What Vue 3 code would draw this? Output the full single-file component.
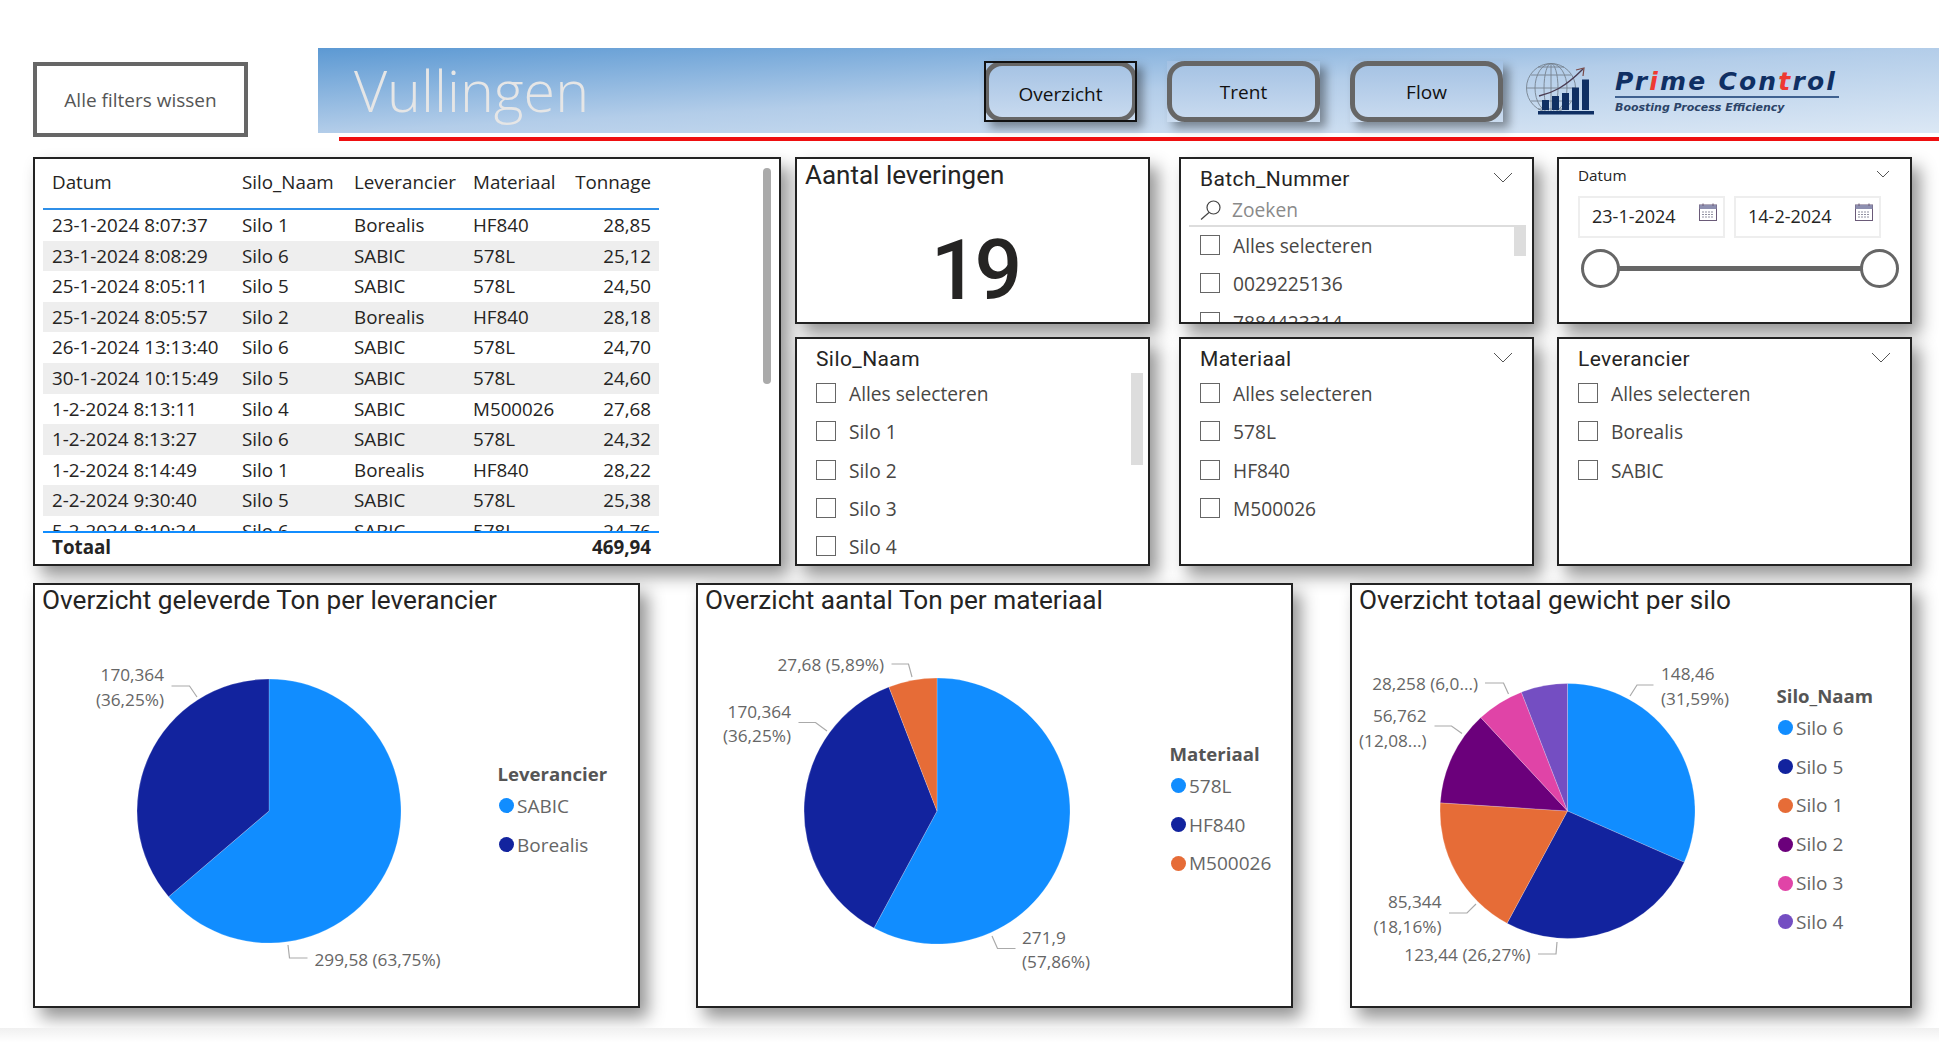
<script setup>
const rows = [
  ['23-1-2024 8:07:37', 'Silo 1', 'Borealis', 'HF840', '28,85'],
  ['23-1-2024 8:08:29', 'Silo 6', 'SABIC', '578L', '25,12'],
  ['25-1-2024 8:05:11', 'Silo 5', 'SABIC', '578L', '24,50'],
  ['25-1-2024 8:05:57', 'Silo 2', 'Borealis', 'HF840', '28,18'],
  ['26-1-2024 13:13:40', 'Silo 6', 'SABIC', '578L', '24,70'],
  ['30-1-2024 10:15:49', 'Silo 5', 'SABIC', '578L', '24,60'],
  ['1-2-2024 8:13:11', 'Silo 4', 'SABIC', 'M500026', '27,68'],
  ['1-2-2024 8:13:27', 'Silo 6', 'SABIC', '578L', '24,32'],
  ['1-2-2024 8:14:49', 'Silo 1', 'Borealis', 'HF840', '28,22'],
  ['2-2-2024 9:30:40', 'Silo 5', 'SABIC', '578L', '25,38'],
  ['5-2-2024 8:10:24', 'Silo 6', 'SABIC', '578L', '24,76'],
]
const C = { blue: '#118dff', navy: '#12239e', orange: '#e66c37', plum: '#6b007b', pink: '#e044a7', violet: '#744ec2' }

function slices(cx, cy, r, parts) {
  let a = 0
  return parts.map(([pct, fill]) => {
    const s = a
    a += (pct / 100) * Math.PI * 2
    const x0 = cx + r * Math.sin(s), y0 = cy - r * Math.cos(s)
    const x1 = cx + r * Math.sin(a), y1 = cy - r * Math.cos(a)
    const large = pct > 50 ? 1 : 0
    return { fill, d: `M${cx} ${cy}L${x0} ${y0}A${r} ${r} 0 ${large} 1 ${x1} ${y1}Z` }
  })
}

const charts = [
  {
    title: 'Overzicht geleverde Ton per leverancier',
    cls: 'chart-a',
    w: 607,
    pie: slices(236, 228, 132, [[63.75, C.blue], [36.25, C.navy]]),
    lines: ['138.5,103 156.5,103 164,114', '255,362 256.5,375 274.5,375'],
    labels: [
      { x: 131, y: 98, a: 'end', t: '170,364' },
      { x: 131, y: 123, a: 'end', t: '(36,25%)' },
      { x: 281.5, y: 383, a: 'start', t: '299,58 (63,75%)' },
    ],
    legend: { title: 'Leverancier', items: [['SABIC', C.blue], ['Borealis', C.navy]] },
  },
  {
    title: 'Overzicht aantal Ton per materiaal',
    cls: 'chart-b',
    w: 597,
    pie: slices(241, 228, 133, [[57.86, C.blue], [36.25, C.navy], [5.89, C.orange]]),
    lines: ['195.5,81 212.5,81 216,94', '102.5,139.5 119.5,139.5 131,148', '296,353 301.5,365.5 319.5,365.5'],
    labels: [
      { x: 188, y: 88, a: 'end', t: '27,68 (5,89%)' },
      { x: 95, y: 135, a: 'end', t: '170,364' },
      { x: 95, y: 159, a: 'end', t: '(36,25%)' },
      { x: 326, y: 361, a: 'start', t: '271,9' },
      { x: 326, y: 385, a: 'start', t: '(57,86%)' },
    ],
    legend: { title: 'Materiaal', items: [['578L', C.blue], ['HF840', C.navy], ['M500026', C.orange]] },
  },
  {
    title: 'Overzicht totaal gewicht per silo',
    cls: 'chart-c',
    w: 562,
    pie: slices(217.5, 228, 127.5, [[31.59, C.blue], [26.27, C.navy], [18.16, C.orange], [12.08, C.plum], [6.01, C.pink], [5.89, C.violet]]),
    lines: ['280,113 287,102 303.5,102', '135,100 153.5,100 158.5,111', '84.5,143 101.5,143 112,150.5', '99,330 117,330 126,321', '188,371 206,371 207,359'],
    labels: [
      { x: 311, y: 97, a: 'start', t: '148,46' },
      { x: 311, y: 122, a: 'start', t: '(31,59%)' },
      { x: 128, y: 107, a: 'end', t: '28,258 (6,0...)' },
      { x: 76.5, y: 139, a: 'end', t: '56,762' },
      { x: 76.5, y: 164, a: 'end', t: '(12,08...)' },
      { x: 91.5, y: 325, a: 'end', t: '85,344' },
      { x: 91.5, y: 350, a: 'end', t: '(18,16%)' },
      { x: 180.5, y: 378, a: 'end', t: '123,44 (26,27%)' },
    ],
    legend: {
      title: 'Silo_Naam',
      items: [['Silo 6', C.blue], ['Silo 5', C.navy], ['Silo 1', C.orange], ['Silo 2', C.plum], ['Silo 3', C.pink], ['Silo 4', C.violet]],
    },
  },
]
const dates = ['23-1-2024', '14-2-2024']
const nav = ['Overzicht', 'Trent', 'Flow']
</script>

<template>
  <div class="page">
    <div class="canvas">
      <header class="top">
        <button class="clear">Alle filters wissen</button>
        <div class="head-col">
          <div class="banner">
            <h1 class="title">Vullingen</h1>
            <div class="navs">
              <div v-for="(n, i) in nav" :key="n" class="nav" :class="{ active: i === 0 }">
                <span class="nav-in">{{ n }}</span>
              </div>
            </div>
            <div class="logo">
              <svg class="globe" width="72" height="54" viewBox="0 0 72 54">
                <g fill="none" stroke="#76828f" stroke-width="0.9">
                  <circle cx="27" cy="25" r="24.5" />
                  <ellipse cx="27" cy="25" rx="16" ry="24.5" />
                  <ellipse cx="27" cy="25" rx="7" ry="24.5" />
                  <path d="M27 .5V49.5M3 25H51M7 12H47M7 38H47M14 4H40M14 46H40" />
                </g>
                <g fill="#0f2f63">
                  <rect x="18" y="37" width="7" height="10" />
                  <rect x="28" y="33" width="7" height="14" />
                  <rect x="38" y="30" width="7" height="17" />
                  <rect x="48" y="24.5" width="7" height="22.5" />
                  <rect x="58" y="16.5" width="7" height="30.5" />
                  <rect x="14" y="48" width="56" height="3.5" />
                </g>
                <path d="M15 33C28 30 40 25 59 6" fill="none" stroke="#4a3c52" stroke-width="1.4" />
                <path d="M52 7L60 5L59 13" fill="none" stroke="#7a4a48" stroke-width="1.2" />
              </svg>
              <div class="brand">
                <div class="brand-name">Pr<em>i</em>me Con<em>t</em>rol</div>
                <div class="brand-tag">Boosting Process Efficiency</div>
              </div>
            </div>
          </div>
          <div class="redline"></div>
        </div>
      </header>

      <section class="mid">
        <div class="card table-card">
          <div class="tbl-row tbl-head">
            <span>Datum</span><span>Silo_Naam</span><span>Leverancier</span><span>Materiaal</span><span class="num">Tonnage</span>
          </div>
          <div class="tbl-body">
            <div v-for="(r, i) in rows" :key="i" class="tbl-row" :class="{ alt: i % 2 === 1 }">
              <span>{{ r[0] }}</span><span>{{ r[1] }}</span><span>{{ r[2] }}</span><span>{{ r[3] }}</span><span class="num">{{ r[4] }}</span>
            </div>
          </div>
          <div class="tbl-row tbl-total">
            <span>Totaal</span><span></span><span></span><span></span><span class="num">469,94</span>
          </div>
          <div class="tbl-scroll"></div>
        </div>

        <div class="card kpi">
          <div class="din kpi-title">Aantal leveringen</div>
          <div class="din kpi-value">19</div>
        </div>

        <div class="card slicer batch">
          <div class="din sl-title">Batch_Nummer</div>
          <svg class="chev" width="20" height="11" viewBox="0 0 20 11"><path d="M1 1L10 10L19 1" fill="none" stroke="#555" /></svg>
          <div class="search">
            <svg width="22" height="20" viewBox="0 0 22 20"><circle cx="13.5" cy="7.5" r="6.5" fill="none" stroke="#444" stroke-width="1.2" /><path d="M9 12.5L1 19.5" stroke="#444" stroke-width="1.2" /></svg>
            <span>Zoeken</span>
          </div>
          <div class="sl-bar batch-bar"></div>
          <div class="sl-list batch-list">
            <div class="sl-item"><i></i>Alles selecteren</div>
            <div class="sl-item"><i></i>0029225136</div>
            <div class="sl-item"><i></i>7884423314</div>
          </div>
        </div>

        <div class="card slicer date">
          <div class="date-title">Datum</div>
          <svg class="chev chev-date" width="14" height="8" viewBox="0 0 14 8"><path d="M1 1L7 7L13 1" fill="none" stroke="#555" /></svg>
          <div class="date-row">
            <div v-for="d in dates" :key="d" class="date-box">
              <span>{{ d }}</span>
              <svg width="18" height="18" viewBox="0 0 18 18">
                <rect x=".5" y="2" width="17" height="15.5" fill="#fff" stroke="#6a5a78" />
                <rect x=".5" y="2" width="17" height="4" fill="#8d8fb0" />
                <path d="M4 .5V3M14 .5V3" stroke="#6a5a78" />
                <path d="M3 9H15M3 11.5H15M3 14H15" stroke="#8f8f9f" stroke-dasharray="2 1" />
              </svg>
            </div>
          </div>
          <div class="range">
            <span class="knob"></span>
            <span class="track"></span>
            <span class="knob"></span>
          </div>
        </div>

        <div class="card slicer silo">
          <div class="din sl-title">Silo_Naam</div>
          <div class="sl-bar silo-bar"></div>
          <div class="sl-list">
            <div class="sl-item" v-for="s in ['Alles selecteren', 'Silo 1', 'Silo 2', 'Silo 3', 'Silo 4']" :key="s"><i></i>{{ s }}</div>
          </div>
        </div>

        <div class="card slicer mat">
          <div class="din sl-title">Materiaal</div>
          <svg class="chev" width="20" height="11" viewBox="0 0 20 11"><path d="M1 1L10 10L19 1" fill="none" stroke="#555" /></svg>
          <div class="sl-list">
            <div class="sl-item" v-for="s in ['Alles selecteren', '578L', 'HF840', 'M500026']" :key="s"><i></i>{{ s }}</div>
          </div>
        </div>

        <div class="card slicer lev">
          <div class="din sl-title">Leverancier</div>
          <svg class="chev" width="20" height="11" viewBox="0 0 20 11"><path d="M1 1L10 10L19 1" fill="none" stroke="#555" /></svg>
          <div class="sl-list">
            <div class="sl-item" v-for="s in ['Alles selecteren', 'Borealis', 'SABIC']" :key="s"><i></i>{{ s }}</div>
          </div>
        </div>
      </section>

      <section class="bottom">
        <div v-for="c in charts" :key="c.title" class="card chart" :class="c.cls">
          <div class="din chart-title">{{ c.title }}</div>
          <svg class="plot" :width="c.w" height="425" :viewBox="`0 0 ${c.w} 425`">
            <path v-for="(p, i) in c.pie" :key="i" :d="p.d" :fill="p.fill" stroke="#fff" stroke-opacity=".35" stroke-width=".6" />
            <polyline v-for="(l, i) in c.lines" :key="'l' + i" :points="l" fill="none" stroke="#aaa" stroke-width="1.2" />
            <text v-for="(t, i) in c.labels" :key="'t' + i" :x="t.x" :y="t.y" :text-anchor="t.a" class="lbl">{{ t.t }}</text>
          </svg>
          <div class="legend">
            <div class="lg-title">{{ c.legend.title }}</div>
            <div v-for="it in c.legend.items" :key="it[0]" class="lg-item">
              <i :style="{ background: it[1] }"></i>{{ it[0] }}
            </div>
          </div>
        </div>
      </section>
    </div>
    <div class="foot"></div>
  </div>
</template>

<style>
html, body { margin: 0; background: #fff; }
</style>

<style scoped>
.page {
  width: 1939px;
  height: 1052px;
  overflow: hidden;
  font-family: "Open Sans", "Noto Sans", sans-serif;
  color: #252423;
  background: #fff;
}
.canvas { height: 1028px; overflow: hidden; padding: 48px 0 0 33px; box-sizing: border-box; }
.foot { height: 24px; background: linear-gradient(#f0f0f0, #fff 60%); }
.din { font-family: Roboto, "Liberation Sans", sans-serif; }

.top { display: flex; align-items: flex-start; }
.clear {
  width: 215px; height: 75px; margin-top: 14px; flex: none;
  border: 4px solid #666; background: #fff; box-sizing: border-box;
  font: 19px "Open Sans", sans-serif; color: #555; padding: 0;
}
.head-col { margin-left: 70px; flex: 1; }
.banner {
  height: 85px; display: flex; align-items: flex-start;
  background: linear-gradient(to bottom right, #5c99d3, #b3cde9 50%, #dce8f5);
}
.title {
  margin: 0 0 0 36px; width: 630px; font-size: 57.4px; font-weight: 350;
  line-height: 85px; color: #e6e6e6;
}
.navs { display: flex; gap: 30px; margin-top: 13px; }
.nav {
  width: 153px; height: 61px; box-sizing: border-box; flex: none;
  background: linear-gradient(#a3c1e3, #cbdcf0);
  box-shadow: 6px 6px 9px rgba(0, 0, 0, .38);
}
.nav-in {
  display: flex; align-items: center; justify-content: center; height: 100%;
  box-sizing: border-box; border: 5px solid #666; border-radius: 18px;
  font-size: 19px; color: #111;
}
.nav.active { outline: 2px solid #111; outline-offset: -2px; }
.nav.active .nav-in { padding-top: 4px; }
.logo { display: flex; margin: 15px 0 0 21px; }
.globe { flex: none; }
.brand { margin: 4px 0 0 19px; width: 224px; }
.brand-name {
  font: italic bold 25px "DejaVu Sans", sans-serif; color: #0f2f63;
  line-height: 29px; border-bottom: 2px solid #3f6190;
  letter-spacing: 2.2px; white-space: nowrap;
}
.brand-name em { color: #ee3a32; font-style: italic; }
.brand-tag {
  font: italic bold 11px "DejaVu Sans", sans-serif; color: #2c4468;
  line-height: 14px; margin-top: 3px; white-space: nowrap;
}
.redline { height: 4px; margin: 4px 0 0 21px; background: #ee0f10; position: relative; }

.card {
  position: relative; box-sizing: border-box; background: #fff;
  border: 2px solid #222;
  box-shadow: 8px 10px 16px rgba(0, 0, 0, .42);
}
.mid {
  display: grid; margin-top: 16px;
  grid-template-columns: 748px 355px 355px 355px;
  grid-template-rows: 167px 229px;
  column-gap: 0; row-gap: 13px;
}
.table-card { grid-row: 1 / 3; padding: 0 0 0 8px; display: flex; flex-direction: column; }
.kpi { margin-left: 14px; width: 355px; }
.batch { grid-column: 3; grid-row: 1; margin-left: 43px; width: 355px; }
.date { grid-column: 4; grid-row: 1; margin-left: 66px; width: 355px; }
.silo { grid-column: 2; grid-row: 2; margin-left: 14px; width: 355px; }
.mat { grid-column: 3; grid-row: 2; margin-left: 43px; width: 355px; }
.lev { grid-column: 4; grid-row: 2; margin-left: 66px; width: 355px; }

.tbl-row {
  display: grid; grid-template-columns: 190px 112px 119px 100px 95px;
  width: 616px; font-size: 18.8px; line-height: 30.6px; white-space: nowrap;
}
.tbl-row span { padding-left: 9px; }
.tbl-row .num { text-align: right; padding: 0 8px 0 0; }
.tbl-head { height: 49px; line-height: 47px; border-bottom: 2px solid #2f8fe8; box-sizing: content-box; }
.tbl-body { height: 321px; overflow: hidden; }
.alt { background: #eeeeee; }
.tbl-total { border-top: 2px solid #118dff; font-weight: 700; line-height: 29px; }
.tbl-scroll {
  position: absolute; left: 728px; top: 9px; width: 8px; height: 216px;
  background: #aaa; border-radius: 4px;
}

.kpi-title { font-size: 26px; line-height: 30px; padding: 1px 0 0 8px; }
.kpi-value { font-size: 84px; line-height: 100px; text-align: center; margin-top: 31px; letter-spacing: -4px; font-weight: 500; padding-left: 4px; }

.slicer { padding: 0 0 0 19px; overflow: hidden; }
.sl-title { font-size: 21px; line-height: 26px; margin-top: 7px; letter-spacing: .4px; }
.chev { position: absolute; right: 19px; top: 13px; }
.sl-list { margin-top: 2.5px; }
.batch-list { margin-top: -0.5px; }
.sl-item {
  display: flex; align-items: center; height: 38.3px; font-size: 19.2px; color: #484644; white-space: nowrap;
}
.sl-item i {
  flex: none; width: 18px; height: 18px; border: 1px solid #666; margin-right: 13px; margin-top: -1px;
}
.sl-bar { position: absolute; background: #ddd; }
.batch-bar { left: 333px; top: 66px; width: 12px; height: 31px; }
.silo-bar { left: 334px; top: 34px; width: 12px; height: 92px; }
.search {
  display: flex; align-items: center; gap: 10px; height: 31px; margin: 2px 8px 0 -11px; padding-left: 11px;
  border-bottom: 2px solid #ddd; color: #8a8a8a; font-size: 19.2px;
}

.date { padding-left: 19px; }
.date-title { font-size: 15.3px; line-height: 20px; margin-top: 6px; }
.chev-date { right: 20px; top: 11px; }
.date-row { display: flex; gap: 9px; margin-top: 11px; }
.date-box {
  width: 147px; height: 42px; box-sizing: border-box; border: 2px solid #eee;
  display: flex; align-items: center; justify-content: space-between;
  padding: 0 6px 2px 12px; font-size: 18px;
}
.date-box svg { margin-top: -8px; }
.range { display: flex; align-items: center; margin: 11px 0 0 3px; width: 318px; }
.knob { width: 39px; height: 39px; flex: none; box-sizing: border-box; border: 3px solid #666; border-radius: 50%; background: #fff; }
.track { flex: 1; height: 5px; background: #666; margin: 0 -1px; }

.bottom { display: flex; margin-top: 17px; }
.chart { height: 425px; overflow: visible; }
.chart-a { width: 607px; }
.chart-b { width: 597px; margin-left: 56px; }
.chart-c { width: 562px; margin-left: 57px; }
.chart-title { font-size: 26.2px; line-height: 30px; padding: 0 0 0 7px; position: relative; z-index: 1; }
.plot { position: absolute; left: -2px; top: -2px; }
.lbl { font: 17.2px "Open Sans", sans-serif; fill: #666; }
.legend { position: absolute; color: #666; }
.chart-a .legend { left: 464px; top: 175px; }
.chart-b .legend { left: 473px; top: 155px; }
.chart-c .legend { left: 426px; top: 97px; }
.lg-title { font-weight: 700; color: #555; font-size: 18.6px; line-height: 28px; height: 26.5px; white-space: nowrap; margin-left: -1.5px; }
.lg-item { display: flex; align-items: center; height: 38.8px; white-space: nowrap; font-size: 19px; }
.lg-item i { width: 15px; height: 15px; border-radius: 50%; margin-right: 3px; flex: none; }
</style>
